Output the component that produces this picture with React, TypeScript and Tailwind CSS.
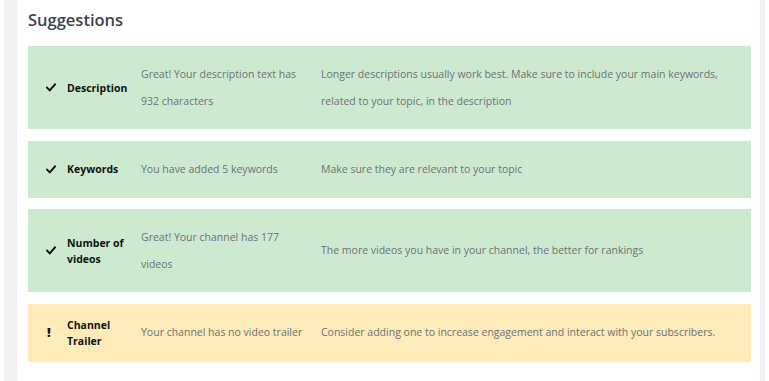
import React from "react";

type Row = {
  ok: boolean;
  label: string[];
  status: string;
  advice: string;
};

const rows: Row[] = [
  {
    ok: true,
    label: ["Description"],
    status: "Great! Your description text has 932 characters",
    advice:
      "Longer descriptions usually work best. Make sure to include your main keywords, related to your topic, in the description",
  },
  {
    ok: true,
    label: ["Keywords"],
    status: "You have added 5 keywords",
    advice: "Make sure they are relevant to your topic",
  },
  {
    ok: true,
    label: ["Number of", "videos"],
    status: "Great! Your channel has 177 videos",
    advice: "The more videos you have in your channel, the better for rankings",
  },
  {
    ok: false,
    label: ["Channel", "Trailer"],
    status: "Your channel has no video trailer",
    advice:
      "Consider adding one to increase engagement and interact with your subscribers.",
  },
];

function Check() {
  return (
    <svg width="10" height="9" viewBox="0 0 10 9" fill="none">
      <path d="M1 4.6 L3.8 7.4 L9 1.4" stroke="#111" strokeWidth="2" strokeLinecap="square" />
    </svg>
  );
}

export default function App() {
  return (
    <div
      className="flex w-[769px] h-[381px] bg-white overflow-hidden"
      style={{ fontFamily: '"Open Sans", "Liberation Sans", sans-serif' }}
    >
      <div className="w-[4px] shrink-0 bg-white" />
      <div className="w-[13px] shrink-0 bg-[#f1f2f7]" />
      <div className="flex-1 pl-[11px] pr-[9px]">
        <h2 className="pt-[7px] text-[16.5px] leading-[26px] font-semibold text-[#3c424f]">
          Suggestions
        </h2>
        <div className="mt-[13px] flex flex-col gap-[11.5px]">
          {rows.map((r, i) => (
            <div
              key={i}
              className={`flex items-center min-h-[57px] ${r.ok ? "bg-[#cde9cf]" : "bg-[#fdebb9]"}`}
            >
              <div className="w-[18px] shrink-0" />
              <div className="w-[21px] shrink-0 flex items-center">
                {r.ok ? (
                  <Check />
                ) : (
                  <span className="text-[13px] font-extrabold text-[#111] leading-none pl-[1px]">!</span>
                )}
              </div>
              <div className="w-[74px] shrink-0 py-[13px] text-[10.5px] leading-[16px] font-bold text-[#111]">
                {r.label.map((l, j) => (
                  <div key={j}>{l}</div>
                ))}
              </div>
              <div className="w-[180px] shrink-0 py-[14.5px] pr-[12px] text-[10.5px] leading-[27px] text-[#6e7178]">
                {r.status}
              </div>
              <div className="flex-1 py-[14.5px] pr-[14px] text-[10.5px] leading-[27px] text-[#6e7178]">
                {r.advice}
              </div>
            </div>
          ))}
        </div>
      </div>
      <div className="w-[5px] shrink-0 bg-[#f1f2f7]" />
      <div className="w-[4px] shrink-0 bg-white" />
    </div>
  );
}
